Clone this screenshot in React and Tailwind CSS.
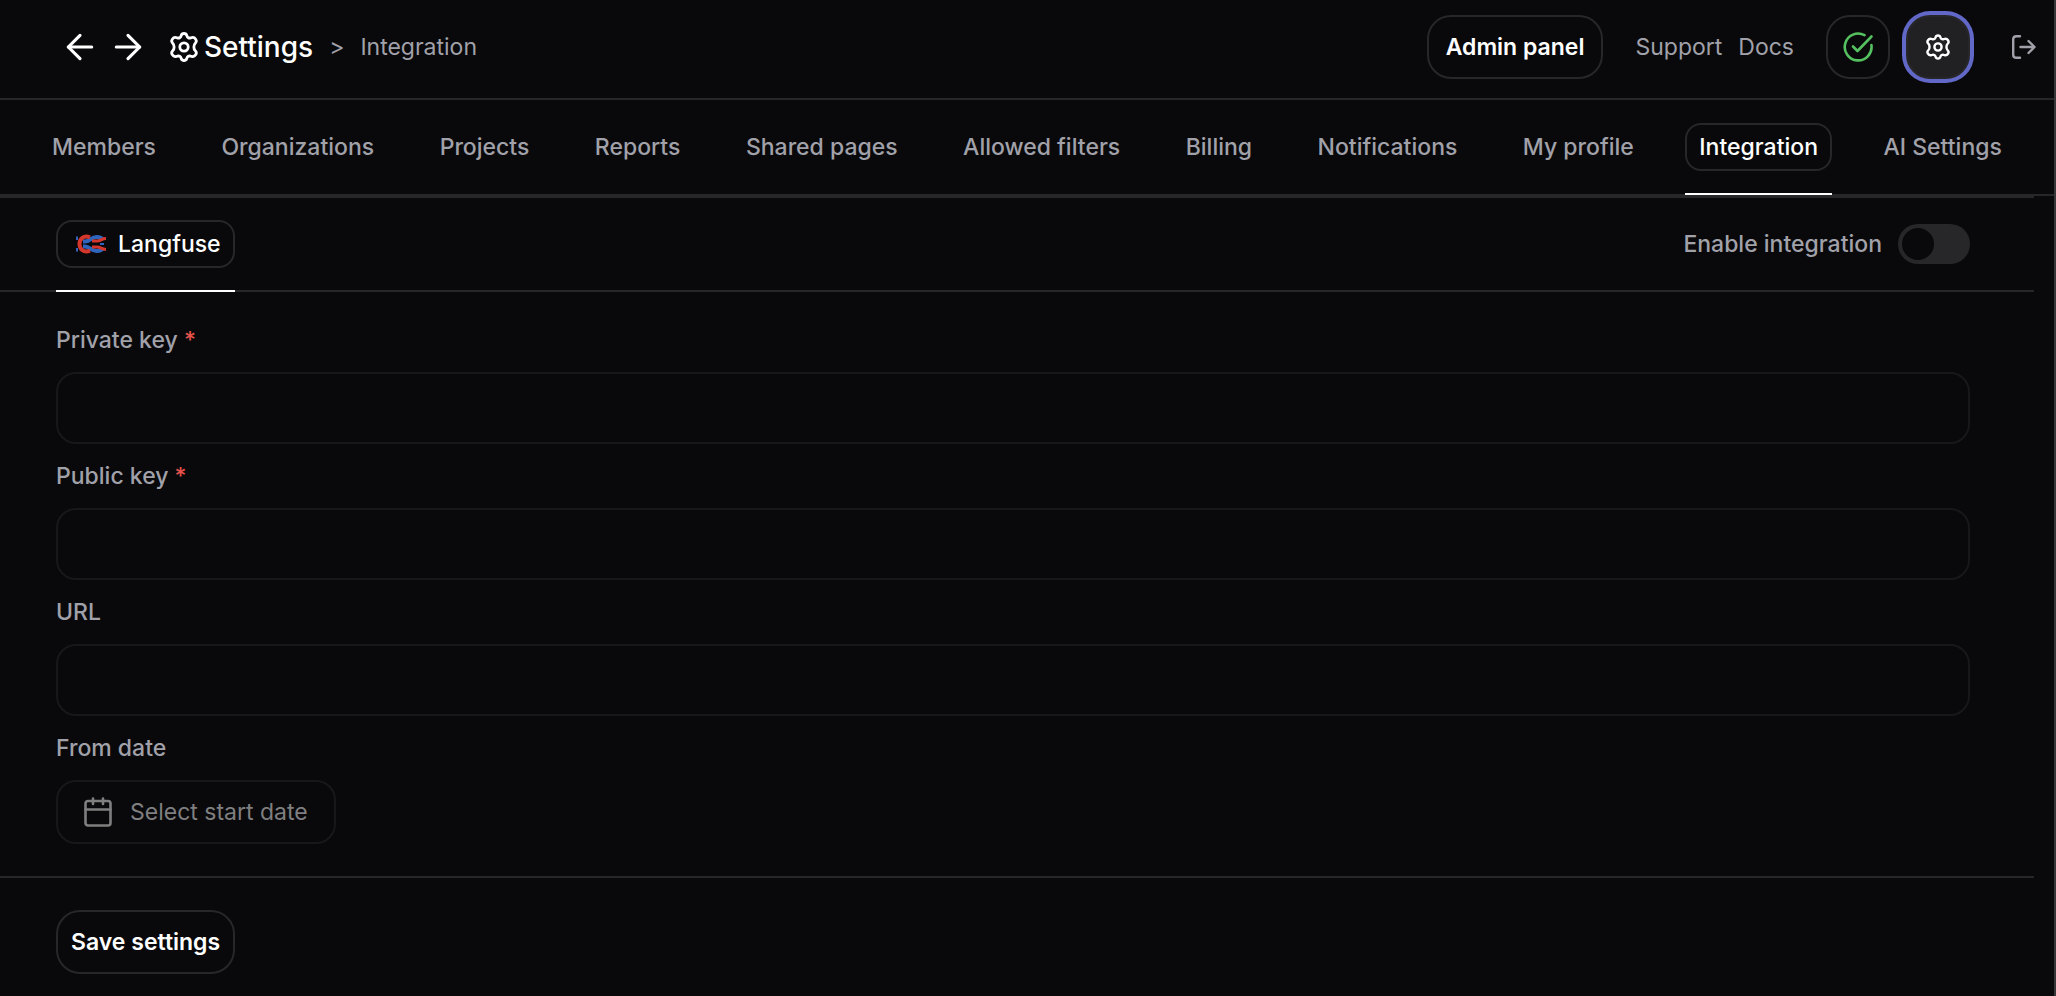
import React, { useState } from "react";
import { ArrowLeft, ArrowRight } from "lucide-react";

const tabs = [
  "Members",
  "Organizations",
  "Projects",
  "Reports",
  "Shared pages",
  "Allowed filters",
  "Billing",
  "Notifications",
  "My profile",
  "Integration",
  "AI Settings",
];

const fields = [
  { id: "privateKey", label: "Private key", required: true },
  { id: "publicKey", label: "Public key", required: true },
  { id: "url", label: "URL", required: false },
];

function GearIcon({ className }) {
  return (
    <svg viewBox="0 0 28 30" className={className} fill="none" stroke="currentColor" strokeWidth="2.8" strokeLinejoin="round" aria-hidden="true">
      <path d="M11.2 3.6C11.9 0.8 16.1 0.8 16.8 3.6C17.3 5.6 18.8 6.4 20.7 5.8L21.6 5.6C25 4.7 27.8 8.8 25.3 11.2C23.4 13 23.4 17 25.3 18.8C27.8 21.2 25 25.3 21.6 24.4L20.7 24.2C18.8 23.6 17.3 24.4 16.8 26.4C16.1 29.2 11.9 29.2 11.2 26.4C10.7 24.4 9.2 23.6 7.3 24.2L6.4 24.4C3 25.3 0.2 21.2 2.7 18.8C4.6 17 4.6 13 2.7 11.2C0.2 8.8 3 4.7 6.4 5.6L7.3 5.8C9.2 6.4 10.7 5.6 11.2 3.6Z" />
      <circle cx="14" cy="15" r="4.2" />
    </svg>
  );
}

function CheckIcon() {
  return (
    <svg viewBox="0 0 32 32" className="size-8" fill="none" stroke="currentColor" strokeWidth="2.6" strokeLinecap="round" strokeLinejoin="round" aria-hidden="true">
      <path d="M22.5 4.2A13.4 13.4 0 1 0 29.4 14" />
      <path d="M11 15.5L15.5 20L29.5 5.5" />
    </svg>
  );
}

function LogoutIcon() {
  return (
    <svg viewBox="0 0 24 24" className="size-6" fill="none" stroke="currentColor" strokeWidth="2.4" strokeLinecap="round" strokeLinejoin="round" aria-hidden="true">
      <path d="M8 1.2H4.5Q1.2 1.2 1.2 4.3V19.7Q1.2 22.8 4.5 22.8H8" />
      <path d="M8.5 12H22.5M16.5 6L22.5 12L16.5 18" />
    </svg>
  );
}

function CalendarIcon() {
  return (
    <svg viewBox="0 0 28 30" className="h-[30px] w-7" fill="none" stroke="currentColor" strokeWidth="2.6" strokeLinecap="round" strokeLinejoin="round" aria-hidden="true">
      <rect x="1.5" y="4" width="25" height="24.5" rx="2.5" />
      <path d="M1.5 12.5H26.5M9 1.5V7M19 1.5V7" />
    </svg>
  );
}

function LangfuseLogo() {
  return (
    <svg viewBox="0 0 30 20" className="h-5 w-[30px]" fill="none" strokeWidth="4" aria-hidden="true">
      <g stroke="#2f65bd">
        <path d="M1 2.5V6M1 14V17.5" strokeWidth="2" />
        <path d="M7 7.5H9C14 7.5 15 3 20.5 3C24 3 26 4 27 6" />
        <path d="M7 12.5H9C14 12.5 15 17 20.5 17C24 17 26 16 27 14" />
        <path d="M24 10H28" strokeWidth="2" />
      </g>
      <g stroke="#d5372d">
        <path d="M14 3.4C7.5 0.8 3.5 5 3.5 10S7.5 19.2 14 16.6" />
        <path d="M16 7H21C25 7 25.5 4.5 30 4.5M16 13H21C25 13 25.5 15.5 30 15.5" strokeWidth="3" />
      </g>
    </svg>
  );
}

function Header() {
  return (
    <header className="flex h-[100px] items-center justify-between border-b-2 border-[#27272a] pb-1 pr-[18px] pl-[60px]">
      <div className="flex items-center">
        <button aria-label="Back" className="text-white">
          <ArrowLeft strokeWidth={1.9} className="size-10" />
        </button>
        <button aria-label="Forward" className="ml-2 text-white">
          <ArrowRight strokeWidth={1.9} className="size-10" />
        </button>
        <h1 className="ml-[22px] flex items-center gap-1.5 text-[28px] font-medium text-white">
          <GearIcon className="h-[30px] w-7" />
          Settings
        </h1>
        <span className="ml-4">&gt;</span>
        <span className="ml-4">Integration</span>
      </div>
      <div className="flex items-center">
        <button className="h-16 rounded-3xl border-2 border-[#27272a] px-[17px] font-semibold text-white">
          Admin panel
        </button>
        <a href="#support" className="ml-8">Support</a>
        <a href="#docs" className="ml-4">Docs</a>
        <button aria-label="Status" className="ml-8 flex size-16 items-center justify-center rounded-3xl border-2 border-[#27272a] text-[#55c05f]">
          <CheckIcon />
        </button>
        <button aria-label="Settings" className="ml-4 flex size-16 items-center justify-center rounded-3xl border-2 border-[#27272a] bg-[#212124] text-white ring-4 ring-[#6268c8]">
          <GearIcon className="h-[26px] w-6" />
        </button>
        <button aria-label="Log out" className="ml-[42px]">
          <LogoutIcon />
        </button>
      </div>
    </header>
  );
}

export default function App() {
  const [activeTab, setActiveTab] = useState("Integration");
  const [enabled, setEnabled] = useState(false);

  return (
    <div className="min-h-screen border-r-2 border-[#37373a] bg-[#09090b] font-['Inter',sans-serif] text-[23px] leading-8 text-[#a1a1aa]">
      <Header />

      <nav className="flex h-24 justify-between border-b-2 border-[#27272a] px-[38px] font-medium">
        {tabs.map((tab) => (
          <div
            key={tab}
            className={`-mb-px flex items-center border-b-2 ${
              tab === activeTab ? "border-white" : "border-transparent"
            }`}
          >
            <button
              onClick={() => setActiveTab(tab)}
              className={`h-12 rounded-2xl border-2 px-3 ${
                tab === activeTab
                  ? "border-[#27272a] text-white"
                  : "border-transparent"
              }`}
            >
              {tab}
            </button>
          </div>
        ))}
      </nav>

      <main className="mr-5">
        <div className="flex h-24 justify-between border-y-2 border-[#27272a] pr-16 pl-14 font-medium">
          <div className="-mb-0.5 flex items-center border-b-2 border-white">
            <button className="flex h-12 items-center gap-3 rounded-2xl border-2 border-[#27272a] pr-3 pl-[18px] text-white">
              <LangfuseLogo />
              Langfuse
            </button>
          </div>
          <label className="flex cursor-pointer items-center gap-4">
            Enable integration
            <input
              type="checkbox"
              role="switch"
              checked={enabled}
              onChange={(e) => setEnabled(e.target.checked)}
              className="h-10 w-[72px] appearance-none rounded-full bg-[#27272a] p-1 before:block before:size-8 before:rounded-full before:bg-[#09090b] checked:bg-white checked:before:ml-8"
            />
          </label>
        </div>

        <form onSubmit={(e) => e.preventDefault()}>
          <div className="border-b-2 border-[#27272a] pt-8 pr-16 pb-8 pl-14">
            {fields.map((field) => (
              <div key={field.id} className="mb-4">
                <label htmlFor={field.id} className="block font-medium">
                  {field.label}
                  {field.required && <span className="text-[#e5534b]"> *</span>}
                </label>
                <input
                  id={field.id}
                  type="text"
                  className="mt-4 block h-[72px] w-full rounded-[20px] border-2 border-[#18181b] bg-transparent px-6 text-white outline-none"
                />
              </div>
            ))}
            <label htmlFor="fromDate" className="block font-medium">
              From date
            </label>
            <button
              id="fromDate"
              type="button"
              className="mt-4 flex h-16 items-center gap-[18px] rounded-[20px] border-2 border-[#18181b] px-[26px] text-[#7f7f80]"
            >
              <CalendarIcon />
              Select start date
            </button>
          </div>
          <div className="px-14 pt-8 pb-4">
            <button type="submit" className="h-16 rounded-3xl border-2 border-[#27272a] px-[13px] font-semibold text-white">
              Save settings
            </button>
          </div>
        </form>
      </main>
    </div>
  );
}
